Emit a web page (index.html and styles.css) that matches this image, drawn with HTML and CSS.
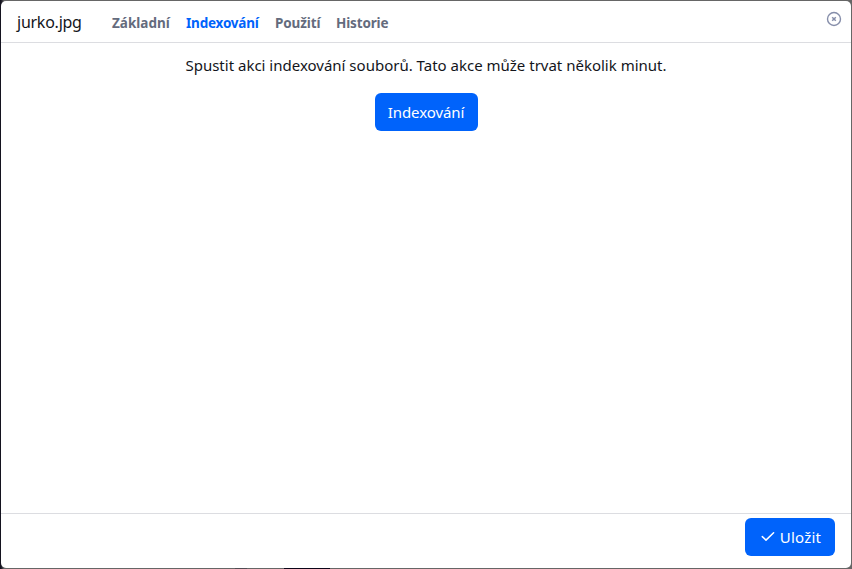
FILE: index.html
```html
<!DOCTYPE html>
<html lang="cs">
<head>
<meta charset="utf-8">
<title>jurko.jpg</title>
<link rel="stylesheet" href="styles.css">
</head>
<body>
<div class="modal">
  <header class="header">
    <h1 class="title">jurko.jpg</h1>
    <nav class="tabs">
      <a class="tab basic">Základní</a>
      <a class="tab active">Indexování</a>
      <a class="tab usage">Použití</a>
      <a class="tab history">Historie</a>
    </nav>
    <svg class="close" viewBox="0 0 16 16" fill="none" stroke="#868eaa"><circle cx="8" cy="8" r="6.5" stroke-width="1.4"/><path d="M6.2 6.2l3.6 3.6M9.8 6.2L6.2 9.8" stroke-width="1.5"/></svg>
  </header>
  <main class="content">
    <p class="message">Spustit akci indexování souborů. Tato akce může trvat několik minut.</p>
    <button class="button index"><span>Indexování</span></button>
  </main>
  <footer class="footer">
    <button class="button save"><svg class="check" viewBox="0 0 14 12" fill="none" stroke="#fff" stroke-width="1.5" stroke-linecap="round" stroke-linejoin="round"><path d="M1.3 5.6L5 9.1L12.6 1.8"/></svg><span>Uložit</span></button>
  </footer>
</div>
</body>
</html>
```
FILE: styles.css
```css
* { box-sizing: border-box; }
body {
  margin: 0;
  height: 569px;
  padding: 1px;
  overflow: hidden;
  background:
    linear-gradient(90deg, transparent 235px, #514d54 235px, #514d54 247px, transparent 247px, transparent 284px, #0b0618 284px, #0b0618 330px, transparent 330px) 0 100% / 100% 1px no-repeat,
    linear-gradient(90deg, #14131f 1px, #666 4px);
  font-family: "Noto Sans", sans-serif;
  font-size: 15px;
  color: #13151b;
}
.modal {
  height: 567px;
  display: flex;
  flex-direction: column;
  background: #fff;
  border-radius: 5px;
}
.header {
  height: 42px;
  flex: none;
  display: flex;
  align-items: center;
  padding: 0 9.5px 0 16px;
  border-bottom: 1px solid #dcdde1;
}
.title {
  width: 95px;
  margin: 0;
  font-size: 16px;
  font-weight: 400;
  line-height: 24px;
  letter-spacing: -0.25px;
}
.tabs { display: flex; flex: 1; gap: 16px; padding-top: 2px; }
.tab {
  font-size: 13.5px;
  font-weight: 700;
  line-height: 20px;
  color: #646b7d;
  white-space: nowrap;
}
.basic { width: 58px; }
.tab.active { width: 73px; color: #0063fb; letter-spacing: -0.2px; }
.usage { width: 45px; letter-spacing: -0.1px; }
.history { letter-spacing: -0.15px; }
.content {
  flex: 1;
  display: flex;
  flex-direction: column;
  align-items: center;
  padding-top: 10px;
}
.message { margin: 0 0 16px; line-height: 24px; white-space: nowrap; }
.button {
  height: 38px;
  display: flex;
  align-items: center;
  justify-content: center;
  padding: 0;
  border: 0;
  border-radius: 6px;
  background: #0063fb;
  color: #fff;
  font: 15px/24px "Noto Sans", sans-serif;
}
.index { width: 103px; letter-spacing: -0.1px; }
.footer {
  height: 55px;
  flex: none;
  display: flex;
  justify-content: flex-end;
  align-items: flex-start;
  padding: 4px 16px 0 0;
  border-top: 1px solid #dcdde1;
}
.save { width: 90px; gap: 5px; padding-left: 2px; letter-spacing: 0.25px; }
.check { width: 14px; height: 12px; }
.close { width: 16px; height: 16px; margin-top: -6px; }
```
